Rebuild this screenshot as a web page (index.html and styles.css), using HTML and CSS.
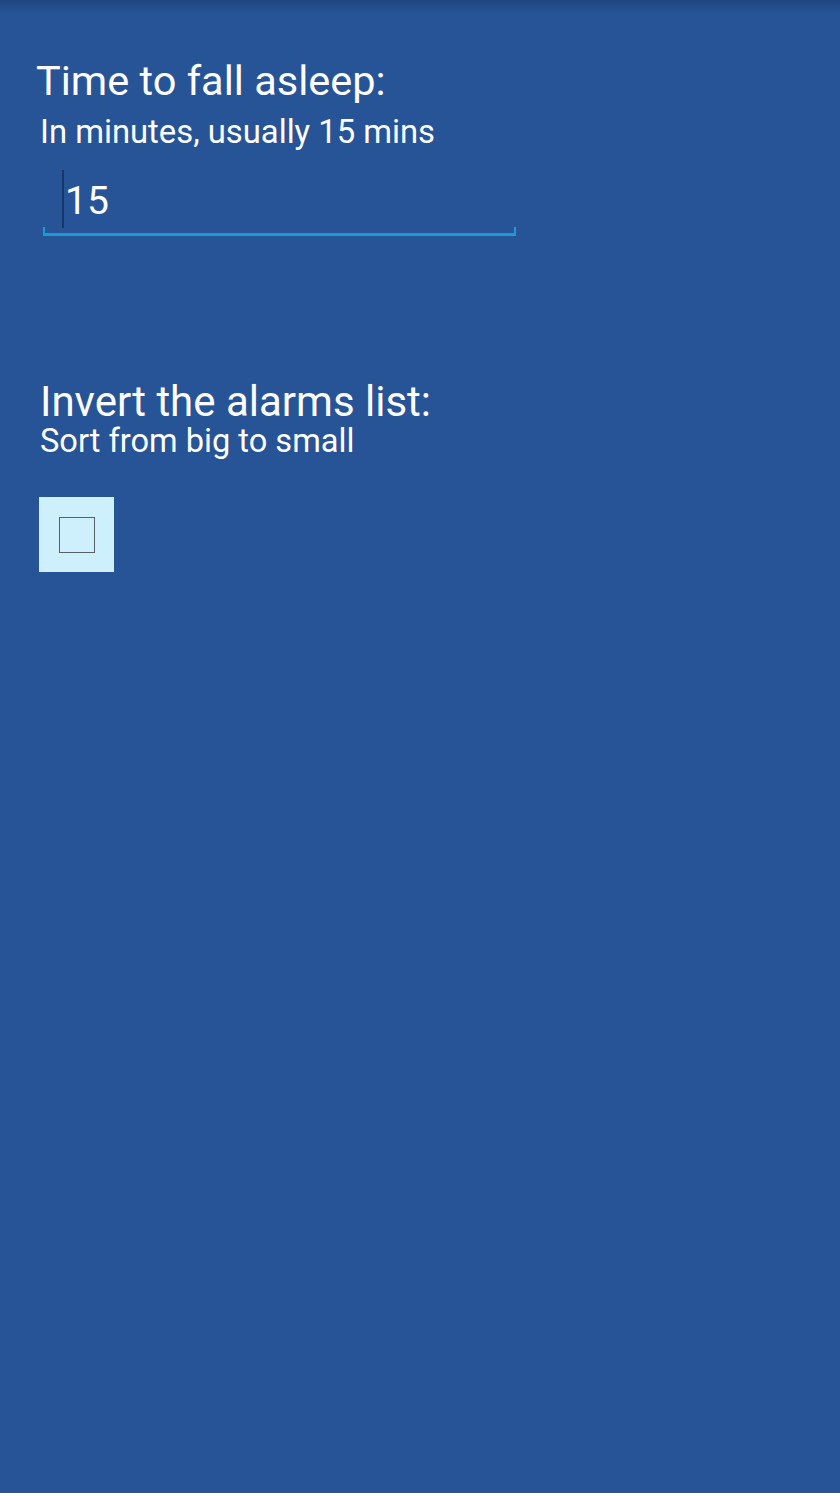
FILE: index.html
```html
<!DOCTYPE html>
<html>
<head>
<meta charset="utf-8">
<link rel="stylesheet" href="styles.css">
</head>
<body>
<div class="screen">
  <div class="shadow"></div>
  <section class="group first">
    <div class="title t1">Time to fall asleep:</div>
    <div class="sub s1">In minutes, usually 15 mins</div>
    <div class="field">
      <span class="cursor"></span><span class="value">15</span>
    </div>
  </section>
  <section class="group second">
    <div class="title t2">Invert the alarms list:</div>
    <div class="sub s2">Sort from big to small</div>
    <div class="check"><span class="box"></span></div>
  </section>
</div>
</body>
</html>
```
FILE: styles.css
```css
html, body {
  margin: 0;
  padding: 0;
  background: #265496;
}
.screen {
  position: relative;
  width: 840px;
  height: 1493px;
  background: #265496;
  font-family: Roboto, "Noto Sans", sans-serif;
  color: #ffffff;
  overflow: hidden;
}
.shadow {
  position: absolute;
  left: 0; top: 0; right: 0;
  height: 14px;
  background: linear-gradient(#1f4680, rgba(38,84,150,0));
}
.group {
  display: flex;
  flex-direction: column;
  align-items: flex-start;
}
.first {
  padding: 56px 0 0 36px;
}
.title {
  font-size: 41.5px;
  line-height: 50px;
}
.sub {
  font-size: 32.8px;
  line-height: 40px;
}
.s1 {
  margin-left: 4px;
  margin-top: 6px;
}
.field {
  margin: 18px 0 0 7px;
  width: 473px;
  height: 66px;
  position: relative;
  display: flex;
  align-items: flex-start;
  border-bottom: 3px solid #1a9bd3;
  box-sizing: border-box;
}
.field::before, .field::after {
  content: "";
  position: absolute;
  bottom: 0;
  width: 2px;
  height: 6px;
  background: #1a9bd3;
}
.field::before { left: 0; }
.field::after { right: 0; }
.cursor {
  display: block;
  width: 2px;
  height: 58px;
  margin-left: 19px;
  background: #163866;
}
.value {
  font-size: 39px;
  line-height: 58px;
  margin-left: 1px;
  padding-top: 2px;
}
.second {
  padding: 143px 0 0 40px;
}
.t2 {
  font-size: 42px;
  line-height: 46px;
}
.s2 {
  font-size: 32.6px;
  line-height: 32px;
}
.check {
  margin-top: 40px;
  margin-left: -1px;
  width: 75px;
  height: 75px;
  background: #cdf0fc;
  display: flex;
  align-items: center;
  justify-content: center;
}
.box {
  display: block;
  width: 36px;
  height: 36px;
  border: 1.5px solid #5a5f63;
  box-sizing: border-box;
}
```
